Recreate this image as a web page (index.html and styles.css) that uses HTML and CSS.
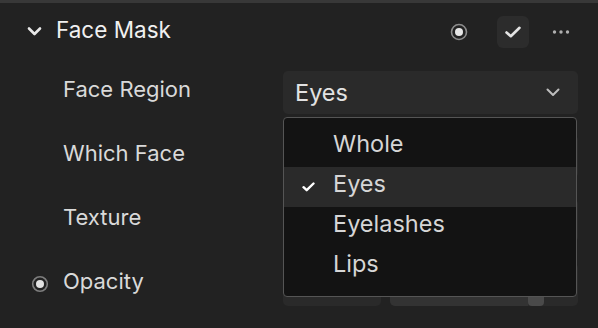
FILE: index.html
```html
<!DOCTYPE html>
<html lang="en">
<head>
    <meta charset="UTF-8">
    <meta name="viewport" content="width=device-width, initial-scale=1.0">
    <title>Face Mask</title>
    <link rel="stylesheet" href="styles.css">
</head>
<body>
    <div class="panel">
        <div class="topline"></div>

        <div class="section-head">
            <svg class="chevron" width="15" height="10" viewBox="0 0 15 10">
                <path d="M2 2.5 L7.5 8 L13 2.5" fill="none" stroke="#e8e8e8" stroke-width="2.6" stroke-linecap="round" stroke-linejoin="round"/>
            </svg>
            <span class="section-title">Face Mask</span>
            <div class="actions">
                <svg class="radio-icon" width="18" height="18" viewBox="0 0 18 18">
                    <circle cx="9" cy="9" r="7.5" fill="none" stroke="#8c8c8c" stroke-width="1.6"/>
                    <circle cx="9" cy="9" r="4" fill="#e6e6e6"/>
                </svg>
                <button class="check-btn">
                    <svg width="18" height="14" viewBox="0 0 18 14">
                        <path d="M2.5 7.5 L6.8 11.2 L15.5 2.8" fill="none" stroke="#e4e4e4" stroke-width="2.6" stroke-linecap="round" stroke-linejoin="round"/>
                    </svg>
                </button>
                <svg class="more" width="18" height="6" viewBox="0 0 18 6">
                    <circle cx="2.5" cy="3" r="1.7" fill="#b0b0b0"/>
                    <circle cx="9" cy="3" r="1.7" fill="#b0b0b0"/>
                    <circle cx="15.5" cy="3" r="1.7" fill="#b0b0b0"/>
                </svg>
            </div>
        </div>

        <div class="props">
            <div class="prop-row">
                <span class="slot"></span>
                <span class="label">Face Region</span>
                <div class="select-wrap">
                    <div class="select">
                        <span>Eyes</span>
                        <svg width="14" height="9" viewBox="0 0 14 9">
                            <path d="M1.5 1.5 L7 7 L12.5 1.5" fill="none" stroke="#bdbdbd" stroke-width="2" stroke-linecap="round" stroke-linejoin="round"/>
                        </svg>
                    </div>
                    <ul class="dropdown">
                        <li class="option">Whole</li>
                        <li class="option active">
                            <svg class="tick" width="13" height="10" viewBox="0 0 13 10">
                                <path d="M1.5 5.2 L4.7 8.2 L11.5 1.5" fill="none" stroke="#ffffff" stroke-width="2.4" stroke-linecap="round" stroke-linejoin="round"/>
                            </svg>
                            Eyes
                        </li>
                        <li class="option">Eyelashes</li>
                        <li class="option">Lips</li>
                    </ul>
                </div>
            </div>

            <div class="prop-row">
                <span class="slot"></span>
                <span class="label">Which Face</span>
                <div class="select"><span>All</span></div>
            </div>

            <div class="prop-row">
                <span class="slot"></span>
                <span class="label">Texture</span>
                <div class="select"><span></span></div>
            </div>

            <div class="prop-row">
                <span class="slot">
                    <svg width="18" height="18" viewBox="0 0 18 18">
                        <circle cx="9" cy="9" r="7.3" fill="none" stroke="#7e7e7e" stroke-width="1.6"/>
                        <circle cx="9" cy="9" r="4" fill="#e2e2e2"/>
                    </svg>
                </span>
                <span class="label">Opacity</span>
                <div class="slider-field">
                    <div class="number-box"></div>
                    <div class="slider">
                        <div class="fill" style="width: 138px;"></div>
                        <div class="thumb"></div>
                    </div>
                </div>
            </div>

            <div class="prop-row last">
                <span class="slot"></span>
                <span class="label"></span>
                <div class="select next"></div>
            </div>
        </div>
    </div>
</body>
</html>
```

FILE: styles.css
```css
html, body {
    margin: 0;
    height: 100%;
    overflow: hidden;
}
body {
    background: #222222;
    font-family: Inter, "Noto Sans", sans-serif;
    color: #d8d8d8;
}
.panel {
    width: 598px;
}
.topline {
    height: 3px;
    background: #383838;
}
.section-head {
    display: flex;
    align-items: center;
    height: 57px;
    padding: 0 28px 0 27px;
}
.chevron {
    margin-right: 14px;
    margin-bottom: 1px;
}
.section-title {
    font-size: 22.5px;
    font-weight: 400;
    color: #f0f0f0;
    padding-bottom: 5px;
}
.actions {
    margin-left: auto;
    display: flex;
    align-items: center;
}
.radio-icon {
    margin-right: 29px;
}
.check-btn {
    width: 32px;
    height: 32px;
    border: none;
    border-radius: 6px;
    background: #2c2c2c;
    display: flex;
    align-items: center;
    justify-content: center;
    padding: 0;
    margin-right: 23px;
}
.prop-row {
    display: grid;
    grid-template-columns: 32px 220px 295px;
    align-items: center;
    height: 64px;
    padding-left: 31px;
}
.prop-row.last {
    height: 20px;
    align-items: end;
}
.slot {
    display: flex;
    align-items: center;
    height: 20px;
    padding-bottom: 1px;
}
.label {
    font-size: 22px;
    color: #d9d9d9;
    padding-bottom: 7px;
}
.select-wrap {
    position: relative;
}
.select {
    height: 43px;
    box-sizing: border-box;
    background: #2a2a2a;
    border-radius: 5px;
    display: flex;
    align-items: center;
    justify-content: space-between;
    padding: 0 18px 0 12px;
    font-size: 23.5px;
    color: #e2e2e2;
}
.select.next {
    height: 2px;
    align-self: end;
    background: #262626;
    border-top: 1px solid #333333;
    border-radius: 4px 4px 0 0;
}
.dropdown {
    position: absolute;
    top: 46px;
    left: 0;
    width: 294px;
    box-sizing: border-box;
    margin: 0;
    padding: 9px 0;
    list-style: none;
    background: #131313;
    border: 1px solid #555555;
    border-radius: 4px;
    z-index: 2;
}
.option {
    position: relative;
    height: 40px;
    box-sizing: border-box;
    display: flex;
    align-items: center;
    padding: 0 0 7px 49px;
    font-size: 23.5px;
    color: #d6d6d6;
}
.option.active {
    background: #2a2a2a;
}
.tick {
    position: absolute;
    left: 18px;
    top: 15px;
}
.slider-field {
    display: flex;
    gap: 9px;
    height: 43px;
}
.number-box {
    width: 98px;
    background: #2a2a2a;
    border-radius: 5px;
}
.slider {
    flex: 1;
    display: flex;
    background: #2a2a2a;
    border-radius: 5px;
    overflow: hidden;
}
.fill {
    background: #333333;
}
.thumb {
    width: 16px;
    background: #4a4a4a;
    border-radius: 0 0 4px 4px;
}
```
